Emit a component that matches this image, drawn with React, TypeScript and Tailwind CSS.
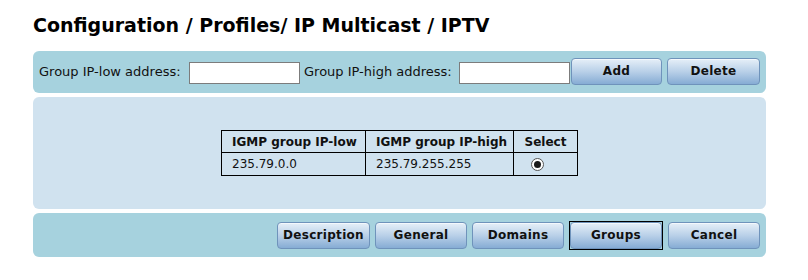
import React from "react";

const btn =
	"h-[27px] rounded-[4px] border border-[#6f93bb] bg-gradient-to-b from-[#e6eff8] via-[#b9d0e8] to-[#86acd4] text-[12px] tracking-[0.3px] font-bold text-[#111] font-['DejaVu_Sans',sans-serif] flex items-center justify-center shadow-[inset_0_1px_0_#f4f8fc]";

function Button({ label, width }: { label: string; width: string }) {
	return <div className={`${btn} ${width}`}>{label}</div>;
}

export default function App() {
	const rows = [{ low: "235.79.0.0", high: "235.79.255.255" }];

	return (
		<div className="w-[808px] h-[280px] bg-white font-['DejaVu_Sans',sans-serif] text-[#111]">
			<div className="ml-[33px] w-[733px] pt-[14px]">
				<h1 className="text-[19px] leading-[22px] font-bold text-black">
					Configuration / Profiles/ IP Multicast / IPTV
				</h1>

				{/* add / delete bar */}
				<div className="mt-[15px] h-[42px] rounded-[6px] bg-[#a6d2de] flex items-center pl-[6px] text-[13px]">
					<span className="w-[150px]">Group IP-low address:</span>
					<input className="w-[111px] h-[22px] mt-[2px] bg-white border border-[#7c7c7c] outline-none" />
					<span className="ml-[4px] w-[155px]">Group IP-high address:</span>
					<input className="w-[111px] h-[22px] mt-[2px] bg-white border border-[#7c7c7c] outline-none" />
					<div className="ml-[1px] -mt-[2px] flex gap-[5px]">
						<Button label="Add" width="w-[91px]" />
						<Button label="Delete" width="w-[93px]" />
					</div>
				</div>

				{/* groups table */}
				<div className="mt-[4px] h-[112px] rounded-[6px] bg-[#d0e2ef] flex justify-center pt-[33px]">
					<table className="border-collapse border border-black text-[12px] h-[45px] self-start">
						<thead>
							<tr className="h-[22px]">
								<th className="w-[144px] border border-black text-left pl-[10px] font-bold">IGMP group IP-low</th>
								<th className="w-[148px] border border-black text-left pl-[10px] font-bold">IGMP group IP-high</th>
								<th className="w-[64px] border border-black text-center font-bold">Select</th>
							</tr>
						</thead>
						<tbody>
							{rows.map((r) => (
								<tr key={r.low} className="h-[23px]">
									<td className="border border-black pl-[10px]">{r.low}</td>
									<td className="border border-black pl-[10px]">{r.high}</td>
									<td className="border border-black pl-[17px]">
										<div className="w-[13px] h-[13px] rounded-full border border-[#555] bg-white flex items-center justify-center">
											<div className="w-[7px] h-[7px] rounded-full bg-[#1a1a1a]" />
										</div>
									</td>
								</tr>
							))}
						</tbody>
					</table>
				</div>

				{/* navigation bar */}
				<div className="mt-[4px] h-[44px] rounded-[6px] bg-[#a6d2de] flex items-center justify-end pr-[6px] gap-[5px]">
					<Button label="Description" width="w-[93px]" />
					<Button label="General" width="w-[92px]" />
					<Button label="Domains" width="w-[92px]" />
					<div className="border border-black">
						<Button label="Groups" width="w-[92px]" />
					</div>
					<Button label="Cancel" width="w-[92px]" />
				</div>
			</div>
		</div>
	);
}
